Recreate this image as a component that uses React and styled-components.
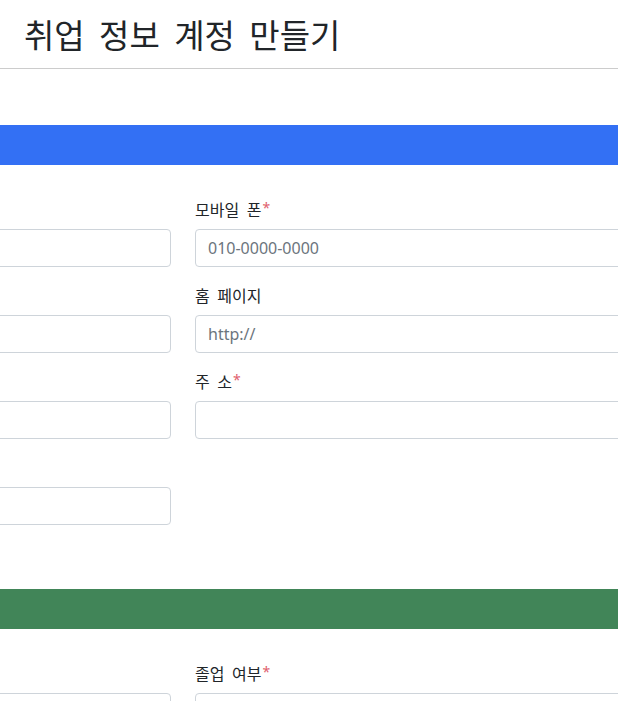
import styled, { createGlobalStyle } from "styled-components";

const GlobalStyle = createGlobalStyle`
	body {
		margin: 0;
		overflow: hidden;
		background: #fff;
		color: #212529;
		font-family: "Noto Sans", "Noto Sans CJK KR", sans-serif;
	}
`;

const Header = styled.header`
	padding: 10px 24px;
	border-bottom: 1px solid #ccc;
	h1 {
		margin: 0;
		font-size: 33px;
		line-height: 48px;
		font-weight: 400;
		word-spacing: 7px;
		font-family: "Noto Sans CJK KR", sans-serif;
	}
`;

const Form = styled.form`
	margin-top: 56px;
	margin-left: -289px;
	width: 944px;
`;

const Section = styled.section`
	padding-bottom: 64px;
`;

const SectionBar = styled.div`
	height: 40px;
	background: ${(p) => p.$color};
`;

const Grid = styled.div`
	display: grid;
	grid-template-columns: 460px 460px;
	gap: 16px 24px;
	padding-top: 32px;
`;

const Field = styled.div`
	display: flex;
	flex-direction: column;
	grid-column: ${(p) => p.$col};
`;

const Label = styled.label`
	display: flex;
	align-items: center;
	height: 24px;
	font-size: 16px;
	margin-bottom: 8px;
	word-spacing: 4px;
	font-family: "Noto Sans CJK KR", sans-serif;
	white-space: pre;
	.req {
		color: #e0606c;
		font-family: "Noto Sans", sans-serif;
		font-size: 14px;
		line-height: 1;
		margin-left: 1px;
		margin-top: -3px;
	}
`;

const Input = styled.input`
	box-sizing: border-box;
	height: 38px;
	padding: 6px 12px;
	font-size: 16px;
	line-height: 24px;
	font-family: "Noto Sans", "Noto Sans CJK KR", sans-serif;
	color: #212529;
	border: 1px solid #ced4da;
	border-radius: 4px;
	outline: none;
	&::placeholder {
		color: #6c757d;
	}
`;

const basicFields = [
	{ label: "이 름", req: true, col: 1 },
	{ label: "모바일 폰", req: true, col: 2, ph: "010-0000-0000" },
	{ label: "이메일", req: true, col: 1 },
	{ label: "홈 페이지", col: 2, ph: "http://" },
	{ label: "생년월일", req: true, col: 1 },
	{ label: "주 소", req: true, col: 2 },
	{ label: "전화번호", col: 1 },
];

const schoolFields = [
	{ label: "최종 학력", req: true, col: 1 },
	{ label: "졸업 여부", req: true, col: 2 },
];

const FieldList = ({ fields }) => (
	<Grid>
		{fields.map((f) => (
			<Field key={f.label} $col={f.col}>
				<Label>
					{f.label}
					{f.req && <span className="req">*</span>}
				</Label>
				<Input placeholder={f.ph} />
			</Field>
		))}
	</Grid>
);

const App = () => {
	return (
		<>
			<GlobalStyle />
			<Header>
				<h1>취업 정보 계정 만들기</h1>
			</Header>
			<Form>
				<Section>
					<SectionBar $color="#3370f4" />
					<FieldList fields={basicFields} />
				</Section>
				<Section>
					<SectionBar $color="#418558" />
					<FieldList fields={schoolFields} />
				</Section>
			</Form>
		</>
	);
};

export default App;
